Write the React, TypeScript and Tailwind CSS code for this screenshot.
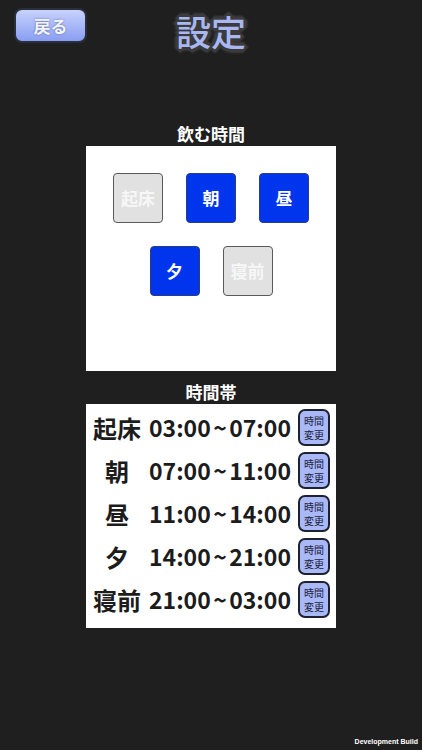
import React from 'react';

const font = { fontFamily: '"Noto Sans CJK JP", "Noto Sans", sans-serif' };

const drinkTimes = [
  [
    { label: '起床', on: false },
    { label: '朝', on: true },
    { label: '昼', on: true },
  ],
  [
    { label: '夕', on: true },
    { label: '寝前', on: false },
  ],
];

const bands = [
  { label: '起床', from: '03:00', to: '07:00' },
  { label: '朝', from: '07:00', to: '11:00' },
  { label: '昼', from: '11:00', to: '14:00' },
  { label: '夕', from: '14:00', to: '21:00' },
  { label: '寝前', from: '21:00', to: '03:00' },
];

const TimeToggle = (props: { label: string; on: boolean }) => {
  const { label, on } = props;
  return (
    <div
      className={
        on
          ? 'w-[50px] h-[50px] rounded-[4px] border border-[#2b3d7a] bg-[#0035ee] flex items-center justify-center text-white text-[17px] font-bold'
          : 'w-[50px] h-[50px] rounded-[4px] border-[1.5px] border-[#5a5a5a] bg-[#e1e1e1] flex items-center justify-center text-[#f7f7f7] text-[17px] font-bold'
      }
    >
      {label}
    </div>
  );
};

const App = () => (
  <div style={font} className="w-full h-[750px] bg-[#1f1f1f] flex flex-col">
    {/* header */}
    <div className="grid grid-cols-[1fr_auto_1fr] h-[56px]">
      <div className="pl-[14px] pt-[8px]">
        <div className="w-[73px] h-[35px] rounded-[8px] border-2 border-[#2a2f3c] bg-gradient-to-b from-[#c8d2fd] to-[#8a9ef2] flex items-center justify-center text-[17px] font-bold text-[#f2f4ff] [text-shadow:0_0_2px_#5a6490]">
          戻る
        </div>
      </div>
      <div className="mt-[12px] text-[35px] leading-[38px] font-medium text-[#a9b8f3] [text-shadow:0_0_1px_#3b3b3b,3px_0_0_#3b3b3b,-3px_0_0_#3b3b3b,0_3px_0_#3b3b3b,0_-3px_0_#3b3b3b,2px_2px_1px_#3b3b3b,-2px_-2px_1px_#3b3b3b,2px_-2px_1px_#3b3b3b,-2px_2px_1px_#3b3b3b,4px_0_2px_#3b3b3b,-4px_0_2px_#3b3b3b,0_4px_2px_#3b3b3b,0_-4px_2px_#3b3b3b]">
        設定
      </div>
      <div />
    </div>

    {/* 飲む時間 */}
    <div className="mt-[66px] text-center text-white text-[17px] leading-[24px] font-bold">飲む時間</div>
    <div className="mx-auto w-[250px] h-[225px] bg-white pt-[27px] flex flex-col items-center gap-[23px]">
      {drinkTimes.map((row, i) => (
        <div key={i} className="flex gap-[23px]">
          {row.map((t) => (
            <TimeToggle key={t.label} label={t.label} on={t.on} />
          ))}
        </div>
      ))}
    </div>

    {/* 時間帯 */}
    <div className="mt-[9px] text-center text-white text-[17px] leading-[24px] font-bold">時間帯</div>
    <div className="mx-auto w-[250px] h-[224px] bg-white pt-[2px] pl-[3px] pr-[6px]">
      {bands.map((b) => (
        <div key={b.label} className="h-[43px] flex items-center">
          <div className="w-[56px] text-center text-[24px] font-bold text-[#1c1c1c] leading-none">{b.label}</div>
          <div className="ml-[4px] w-[142px] flex items-center justify-between text-[23px] font-bold text-[#1c1c1c] leading-none">
            <span>{b.from}</span>
            <span>~</span>
            <span>{b.to}</span>
          </div>
          <div className="ml-auto w-[32px] h-[37px] rounded-[7px] border-2 border-[#1e2230] bg-[#a9b8f6] flex items-center justify-center text-center text-[10px] leading-[14px] text-[#1b2240]">
            時間
            <br />
            変更
          </div>
        </div>
      ))}
    </div>

    <div className="mt-auto pr-[4px] pb-[4px] text-right text-[7px] leading-[9px] font-bold text-white" style={{ fontFamily: '"Liberation Sans", sans-serif' }}>
      Development Build
    </div>
  </div>
);

export default App;
